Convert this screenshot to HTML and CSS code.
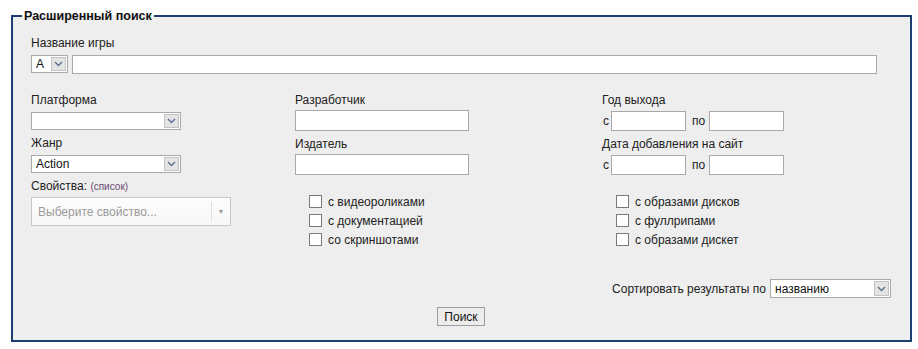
FILE: index.html
```html
<!DOCTYPE html>
<html lang="ru">
<head>
  <meta charset="UTF-8" />
  <title>Расширенный поиск</title>
  <link rel="stylesheet" href="styles.css">
</head>
<body>

  <form class="search" onsubmit="return false">
    <fieldset class="box">
      <legend>Расширенный поиск</legend>

      <div class="lbl">Название игры</div>
      <div class="name-row">
        <div class="sel sel-letter">
          <select><option>A</option></select>
          <span class="arrow"><svg width="9" height="6" viewBox="0 0 9 6"><path d="M1 1l3.5 3.5L8 1" fill="none" stroke="#5a6f93" stroke-width="1.4"/></svg></span>
        </div>
        <input class="text name-input" type="text" />
      </div>

      <div class="cols">
        <div class="col col-1">
          <div class="lbl">Платформа</div>
          <div class="sel sel-mid">
            <select><option></option></select>
            <span class="arrow"><svg width="9" height="6" viewBox="0 0 9 6"><path d="M1 1l3.5 3.5L8 1" fill="none" stroke="#5a6f93" stroke-width="1.4"/></svg></span>
          </div>
          <div class="lbl gap">Жанр</div>
          <div class="sel sel-mid">
            <select><option>Action</option></select>
            <span class="arrow"><svg width="9" height="6" viewBox="0 0 9 6"><path d="M1 1l3.5 3.5L8 1" fill="none" stroke="#5a6f93" stroke-width="1.4"/></svg></span>
          </div>
          <div class="lbl gap">Свойства: <a class="small" href="#">(список)</a></div>
          <div class="chosen">
            <span class="placeholder">Выберите свойство...</span>
            <span class="chosen-arrow">▼</span>
          </div>
        </div>

        <div class="col col-2">
          <div class="lbl">Разработчик</div>
          <input class="text wide" type="text" />
          <div class="lbl gap">Издатель</div>
          <input class="text wide" type="text" />
          <div class="checks">
            <label><input type="checkbox" /> с видеороликами</label>
            <label><input type="checkbox" /> с документацией</label>
            <label><input type="checkbox" /> со скриншотами</label>
          </div>
        </div>

        <div class="col col-3">
          <div class="lbl">Год выхода</div>
          <div class="range">
            <span>с</span><input class="text short" type="text" />
            <span class="to">по</span><input class="text short" type="text" />
          </div>
          <div class="lbl gap">Дата добавления на сайт</div>
          <div class="range">
            <span>с</span><input class="text short" type="text" />
            <span class="to">по</span><input class="text short" type="text" />
          </div>
          <div class="checks">
            <label><input type="checkbox" /> с образами дисков</label>
            <label><input type="checkbox" /> с фуллрипами</label>
            <label><input type="checkbox" /> с образами дискет</label>
          </div>
        </div>
      </div>

      <div class="sort-row">
        <span>Сортировать результаты по</span>
        <div class="sel sel-sort">
          <select><option>названию</option></select>
          <span class="arrow"><svg width="9" height="6" viewBox="0 0 9 6"><path d="M1 1l3.5 3.5L8 1" fill="none" stroke="#5a6f93" stroke-width="1.4"/></svg></span>
        </div>
      </div>

      <div class="submit-row">
        <button type="submit" class="btn">Поиск</button>
      </div>
    </fieldset>
  </form>

</body>
</html>
```

FILE: styles.css
```css
body {
  margin: 0;
  background: #fff;
  font-family: "Liberation Sans", Arial, sans-serif;
  font-size: 12px;
  color: #222;
}
.search { margin: 0; }
.box {
  margin: 8px 6px 8px 11px;
  padding: 11px 19px 14px 18px;
  border: 2px solid #1c3d70;
  background: #eeeeee;
  min-width: 0;
}
.box legend {
  margin-left: -9px;
  padding: 0 2px;
  font-size: 12.5px;
  font-weight: bold;
  line-height: 16px;
  color: #111;
}
.lbl {
  line-height: 16px;
  height: 16px;
}
.lbl.gap { margin-top: 5px; }
.small {
  font-size: 10px;
  color: #6a4a6e;
  text-decoration: none;
}

/* selects */
.sel {
  display: flex;
  height: 18px;
  box-sizing: border-box;
  border: 1px solid #a9a9a9;
  background: #fff;
}
.sel select {
  flex: 1;
  min-width: 0;
  appearance: none;
  border: none;
  background: transparent;
  padding: 0 0 0 4px;
  font: inherit;
  color: #111;
  outline: none;
}
.sel .arrow {
  width: 15px;
  margin: 1px;
  box-sizing: border-box;
  border: 1px solid #c3c3c3;
  background: #e4e4e4;
  display: flex;
  align-items: center;
  justify-content: center;
}
.sel-letter { width: 37px; }
.sel-mid { width: 150px; margin-top: 4px; }
.sel-sort { width: 121px; height: 19px; }

.text {
  box-sizing: border-box;
  border: 1px solid #a9a9a9;
  background: #fff;
  font: inherit;
  padding: 1px 3px;
  margin: 0;
  outline: none;
}

.name-row {
  display: flex;
  gap: 4px;
  margin-top: 4px;
  margin-right: 14px;
}
.name-input { flex: 1; height: 19px; }

.cols {
  display: flex;
  margin-top: 18px;
}
.col-1 { width: 264px; }
.col-2 { width: 307px; }
.col-3 { flex: 1; }

.chosen {
  display: flex;
  align-items: center;
  width: 200px;
  height: 29px;
  margin-top: 3px;
  box-sizing: border-box;
  border: 1px solid #c8c8c8;
  background: linear-gradient(#fdfdfd, #f6f6f6);
}
.placeholder {
  flex: 1;
  padding-left: 6px;
  color: #9a9a9a;
}
.chosen-arrow {
  width: 18px;
  height: 19px;
  border-left: 1px solid #dedede;
  font-size: 7px;
  line-height: 19px;
  text-align: center;
  color: #999;
}

.wide { display: block; width: 174px; height: 21px; margin-top: 2px; }

.range {
  display: flex;
  align-items: center;
  margin-top: 3px;
}
.range span { padding: 0 2px 0 1px; }
.range .to { padding: 0 4px 0 6px; }
.short { width: 75px; height: 20px; }

.checks {
  margin-top: 17px;
  padding-left: 14px;
}
.checks label {
  display: flex;
  align-items: center;
  height: 19px;
}
.checks input {
  appearance: none;
  width: 13px;
  height: 13px;
  margin: 0 6px 0 0;
  border: 1px solid #7a7a7a;
  background: #fff;
}

.sort-row {
  display: flex;
  justify-content: flex-end;
  align-items: center;
  gap: 4px;
  margin-top: 30px;
}

.submit-row {
  text-align: center;
  margin-top: 9px;
}
.btn {
  width: 48px;
  height: 19px;
  padding: 0;
  font: inherit;
  color: #111;
  border: 1px solid #9d9d9d;
  background: #ececec;
}
```
